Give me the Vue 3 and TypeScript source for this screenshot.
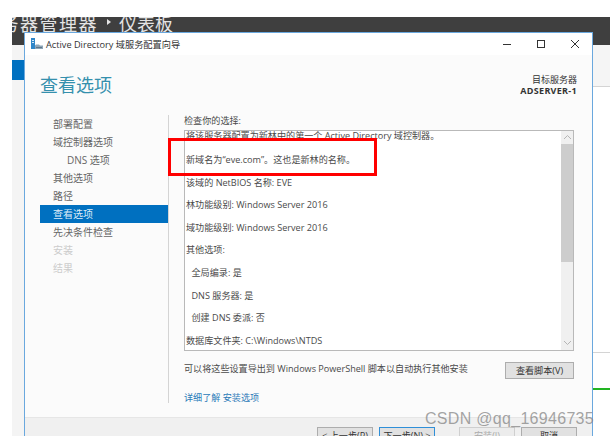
<script setup lang="ts">
const steps = [
  { label: '部署配置', state: '' },
  { label: '域控制器选项', state: '' },
  { label: 'DNS 选项', state: 'sub' },
  { label: '其他选项', state: '' },
  { label: '路径', state: '' },
  { label: '查看选项', state: 'active' },
  { label: '先决条件检查', state: '' },
  { label: '安装', state: 'off' },
  { label: '结果', state: 'off' }
]

const lines = [
  { text: '将该服务器配置为新林中的第一个 Active Directory 域控制器。', cls: 'first' },
  { text: '新域名为“eve.com”。这也是新林的名称。', cls: '' },
  { text: '该域的 NetBIOS 名称: EVE', cls: '' },
  { text: '林功能级别: Windows Server 2016', cls: '' },
  { text: '域功能级别: Windows Server 2016', cls: '' },
  { text: '其他选项:', cls: '' },
  { text: '全局编录: 是', cls: 'indent' },
  { text: 'DNS 服务器: 是', cls: 'indent' },
  { text: '创建 DNS 委派: 否', cls: 'indent' },
  { text: '数据库文件夹: C:\\Windows\\NTDS', cls: '' }
]
</script>

<template>
  <div class="page">
    <div class="topbar"><span class="crumb">务器管理器</span><i class="caret"></i><span>仪表板</span></div>
    <div class="desk">
      <div class="side-strip"><div class="side-block"></div></div>

      <div class="wizard">
        <div class="titlebar">
          <svg class="app-icon" width="12" height="12" viewBox="0 0 12 12">
            <rect x="0" y="0" width="4" height="11" fill="#2f86c8" />
            <rect x="1" y="2" width="2" height="1" fill="#d5e8f6" />
            <rect x="1" y="4" width="2" height="1" fill="#d5e8f6" />
            <path d="M4 11V7.5L5 6.5H8L9 7.5H12V11Z" fill="#8ea6b8" />
            <rect x="5" y="9" width="6" height="1" fill="#5f7688" />
          </svg>
          <span class="title">Active Directory 域服务配置向导</span>
          <div class="win-btns">
            <svg width="10" height="10" viewBox="0 0 10 10"><path d="M1 5.5H9" stroke="#333" fill="none" /></svg>
            <svg width="10" height="10" viewBox="0 0 10 10"><rect x="1.5" y="1.5" width="7" height="7" stroke="#333" fill="none" /></svg>
            <svg width="10" height="10" viewBox="0 0 10 10"><path d="M1 1L9 9M9 1L1 9" stroke="#333" fill="none" /></svg>
          </div>
        </div>

        <div class="body">
          <div class="head">
            <h1>查看选项</h1>
            <div class="target">
              <div class="target-row">目标服务器</div>
              <div class="target-row strong">ADSERVER-1</div>
            </div>
          </div>

          <div class="main">
            <ul class="steps">
              <li v-for="s in steps" :key="s.label" :class="s.state">{{ s.label }}</li>
            </ul>

            <div class="content">
              <div class="caption">检查你的选择:</div>
              <div class="listbox">
                <div class="lines">
                  <p v-for="l in lines" :key="l.text" :class="l.cls">{{ l.text }}</p>
                </div>
                <div class="scroll">
                  <svg class="arrow" width="9" height="6" viewBox="0 0 9 6"><path d="M1 5L4.5 1.5L8 5" stroke="#b5b5b5" fill="none" /></svg>
                  <div class="thumb"></div>
                  <svg class="arrow down" width="9" height="6" viewBox="0 0 9 6"><path d="M1 1L4.5 4.5L8 1" stroke="#b5b5b5" fill="none" /></svg>
                </div>
                <div class="callout"></div>
              </div>
              <div class="export">
                <span>可以将这些设置导出到 Windows PowerShell 脚本以自动执行其他安装</span>
                <button class="btn script">查看脚本(V)</button>
              </div>
              <a class="more">详细了解 安装选项</a>
            </div>
          </div>
        </div>

        <div class="footer">
          <button class="btn">&lt; 上一步(P)</button>
          <button class="btn primary">下一步(N) &gt;</button>
          <button class="btn disabled">安装(I)</button>
          <button class="btn">取消</button>
        </div>
      </div>

      <div class="right-strip">
        <div class="r-head"></div>
        <div class="r-body"></div>
        <div class="r-green"></div>
      </div>
    </div>
    <div class="watermark">CSDN @qq_16946735</div>
  </div>
</template>

<style>
html, body {
  margin: 0;
  background: #fff;
}
</style>

<style scoped>
.page {
  position: relative;
  width: 610px;
  height: 436px;
  overflow: hidden;
  background: #fff;
  padding-top: 17px;
  box-sizing: border-box;
  font-family: "Open Sans", "Noto Sans CJK SC", sans-serif;
  color: #4a4a4a;
  font-size: 9.1px;
}

.topbar {
  margin-left: 12px;
  height: 28px;
  background: #3f3f3f;
  color: #e4e4e4;
  font-family: "Noto Sans CJK SC", sans-serif;
  font-size: 18px;
  line-height: 13px;
  white-space: nowrap;
  overflow: hidden;
  display: flex;
}

.crumb {
  margin-left: -11.5px;
  letter-spacing: 1.5px;
}

.caret {
  flex: none;
  width: 0;
  height: 0;
  margin: 2px 8px 0 9px;
  border-left: 4px solid #e4e4e4;
  border-top: 3px solid transparent;
  border-bottom: 3px solid transparent;
}

.desk {
  display: flex;
  height: 391px;
  margin-left: 12px;
  position: relative;
}

.side-strip {
  width: 12px;
  background: #f4f4f4;
}

.side-block {
  margin-top: 15px;
  height: 20px;
  background: #0070c0;
}

/* 向导窗口盖在顶栏上 */
.wizard {
  flex: none;
  width: 569px;
  height: 404px;
  margin-top: -13px;
  box-sizing: border-box;
  border: 1px solid #6aa8de;
  border-bottom: 0;
  background: #fff;
  display: flex;
  flex-direction: column;
  overflow: hidden;
  z-index: 1;
}

.titlebar {
  height: 22px;
  flex: none;
  display: flex;
  align-items: center;
  padding: 0 12px 0 6px;
}

.app-icon {
  margin-right: 3px;
}

.title {
  color: #333;
  font-size: 9.2px;
}

.win-btns {
  margin-left: auto;
  display: flex;
  gap: 24px;
}

.body {
  flex: none;
  height: 362px;
  background: #fbfbfb;
  display: flex;
  flex-direction: column;
}

.head {
  flex: none;
  height: 50px;
  display: flex;
  justify-content: space-between;
  padding: 18px 15px 0 15px;
  box-sizing: border-box;
}

.head h1 {
  margin: 0;
  font-size: 18px;
  line-height: 24px;
  font-weight: 400;
  color: #3590ad;
}

.target {
  text-align: right;
  font-size: 9px;
  padding-top: 1px;
  color: #333;
}

.target-row {
  height: 11px;
  line-height: 11px;
}

.target-row.strong {
  font-weight: 700;
  letter-spacing: 0.3px;
}

.main {
  display: flex;
  flex: 1;
}

.steps {
  list-style: none;
  margin: 10px 0 0 15px;
  padding: 0;
  width: 128px;
  flex: none;
}

.steps li {
  height: 18px;
  line-height: 18px;
  padding-left: 13px;
  font-size: 10px;
  color: #666;
}

.steps li.sub {
  padding-left: 27px;
}

.steps li.active {
  background: #0070c0;
  color: #dcebf7;
}

.steps li.off {
  color: #ccc;
}

.content {
  width: 390px;
  height: 288px;
  margin-top: 10px;
  border-left: 1px solid #d4d4d4;
  padding-left: 15px;
}

.caption {
  height: 15px;
  line-height: 12px;
}

.listbox {
  position: relative;
  display: flex;
  height: 221px;
  width: 390px;
  box-sizing: border-box;
  border: 1px solid #b9b9b9;
  background: #fff;
}

.lines {
  flex: 1;
  overflow: hidden;
  padding-left: 1px;
}

.lines p {
  margin: 0;
  line-height: 22.6px;
  white-space: nowrap;
}

.lines p.first {
  height: 18px;
  line-height: 10px;
}

.lines p.indent {
  padding-left: 5.5px;
}

.scroll {
  flex: none;
  width: 12px;
  background: #f0f0f0;
  display: flex;
  flex-direction: column;
  align-items: center;
}

.arrow {
  margin: 3px 0 4px;
  flex: none;
}

.arrow.down {
  margin-top: auto;
  margin-bottom: 4px;
}

.thumb {
  width: 100%;
  height: 118px;
  background: #cdcdcd;
}

/* 截图上的红色标注框 */
.callout {
  position: absolute;
  left: -17px;
  top: 7px;
  width: 209px;
  height: 38px;
  box-sizing: border-box;
  border: 3px solid #f00;
}

.export {
  display: flex;
  justify-content: space-between;
  align-items: flex-start;
  width: 390px;
  height: 17px;
  margin-top: 11px;
  line-height: 13px;
}

.btn {
  flex: none;
  box-sizing: border-box;
  font: inherit;
  color: #333;
  height: 17px;
  padding: 0;
  width: 56px;
  background: #e1e1e1;
  border: 1px solid #adadad;
}

.script {
  width: 69px;
}

.more {
  display: block;
  margin-top: 13px;
  line-height: 12px;
  color: #2a7ab8;
}

.footer {
  flex: 1;
  background: #f0f0f0;
  border-top: 1px solid #e6e6e6;
  display: flex;
  align-items: flex-start;
  justify-content: flex-end;
  padding: 9px 15px 0 0;
  gap: 6px;
}

/* 按钮下半部分被截掉，文字靠上 */
.footer .btn {
  padding-bottom: 4px;
}

.btn.primary {
  border-color: #2f8fd8;
  margin-right: 18px;
}

.btn.disabled {
  color: #aaa;
  background: #ececec;
  border-color: #cfcfcf;
}

.right-strip {
  flex: 1;
  display: flex;
  flex-direction: column;
}

.r-head {
  height: 41px;
  background: #f5f5f5;
  border-bottom: 1px solid #d4d4d4;
}

.r-body {
  height: 265px;
  border-bottom: 1px solid #d4d4d4;
}

.r-green {
  margin-top: 35px;
  height: 2px;
  background: #22b422;
}

.watermark {
  position: absolute;
  right: 16px;
  top: 410px;
  font-family: "Liberation Sans", sans-serif;
  font-size: 16px;
  line-height: 18px;
  letter-spacing: 0.3px;
  color: rgba(125, 125, 125, 0.7);
  z-index: 2;
}
</style>
